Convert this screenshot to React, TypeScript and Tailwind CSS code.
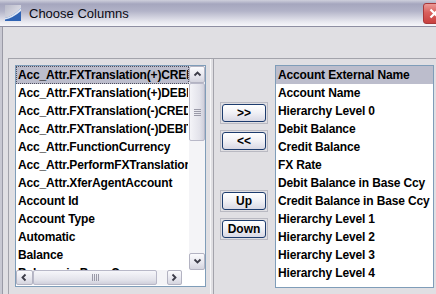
import React from "react";

const leftItems = [
  "Acc_Attr.FXTranslation(+)CREDIT",
  "Acc_Attr.FXTranslation(+)DEBIT",
  "Acc_Attr.FXTranslation(-)CREDIT",
  "Acc_Attr.FXTranslation(-)DEBIT",
  "Acc_Attr.FunctionCurrency",
  "Acc_Attr.PerformFXTranslation",
  "Acc_Attr.XferAgentAccount",
  "Account Id",
  "Account Type",
  "Automatic",
  "Balance",
  "Balance in Base Ccy",
];

const rightItems = [
  "Account External Name",
  "Account Name",
  "Hierarchy Level 0",
  "Debit Balance",
  "Credit Balance",
  "FX Rate",
  "Debit Balance in Base Ccy",
  "Credit Balance in Base Ccy",
  "Hierarchy Level 1",
  "Hierarchy Level 2",
  "Hierarchy Level 3",
  "Hierarchy Level 4",
];

type Dir = "up" | "down" | "left" | "right";

const chevron: Record<Dir, string> = {
  up: "M1.5 5.5 L4.5 2.5 L7.5 5.5",
  down: "M1.5 2.5 L4.5 5.5 L7.5 2.5",
  left: "M5.5 1.5 L2.5 4.5 L5.5 7.5",
  right: "M2.5 1.5 L5.5 4.5 L2.5 7.5",
};

function ArrowButton({ dir, className }: { dir: Dir; className: string }) {
  return (
    <div
      className={`${className} flex items-center justify-center rounded-[2px] border border-[#b3b3c2] bg-[linear-gradient(to_bottom,#fbfbfd,#e6e6ee_60%,#d4d4de)]`}
    >
      <svg width="9" height="9" viewBox="0 0 9 9">
        <path d={chevron[dir]} fill="none" stroke="#3c3c48" strokeWidth="1.8" />
      </svg>
    </div>
  );
}

function VScrollbar() {
  return (
    <div className="flex h-[204px] w-[16px] flex-col bg-[#f4f4f7]">
      <ArrowButton dir="up" className="h-[17px] w-[16px]" />
      <div className="flex h-[58px] items-center justify-center rounded-[2px] border border-[#b8b8c8] bg-[linear-gradient(to_right,#f4f4f8,#e2e2ea_70%,#cfcfdb)]">
        <div className="flex flex-col gap-[1px]">
          <div className="h-px w-[7px] bg-[#9a9aa8]" />
          <div className="h-px w-[7px] bg-[#9a9aa8]" />
          <div className="h-px w-[7px] bg-[#9a9aa8]" />
          <div className="h-px w-[7px] bg-[#9a9aa8]" />
        </div>
      </div>
      <div className="flex-1" />
      <ArrowButton dir="down" className="h-[17px] w-[16px]" />
    </div>
  );
}

function HScrollbar() {
  return (
    <div className="flex h-[15px] w-[173px] bg-white">
      <div className="flex h-[15px] w-[166px] bg-[#f4f4f7]">
        <ArrowButton dir="left" className="h-[15px] w-[17px]" />
        <div className="flex w-[124px] items-center justify-center rounded-[2px] border border-[#b8b8c8] bg-[linear-gradient(to_bottom,#f6f6fa,#e2e2ea_70%,#cfcfdb)]">
          <div className="flex gap-[1px]">
            <div className="h-[7px] w-px bg-[#9a9aa8]" />
            <div className="h-[7px] w-px bg-[#9a9aa8]" />
            <div className="h-[7px] w-px bg-[#9a9aa8]" />
            <div className="h-[7px] w-px bg-[#9a9aa8]" />
          </div>
        </div>
        <div className="flex-1" />
        <ArrowButton dir="right" className="h-[15px] w-[15px]" />
      </div>
    </div>
  );
}

function ListRow({
  text,
  selected,
  focused,
}: {
  text: string;
  selected?: boolean;
  focused?: boolean;
}) {
  return (
    <div
      className={`h-[18px] shrink-0 overflow-hidden whitespace-nowrap px-[1px] text-[12px] leading-[16px] font-bold tracking-[-0.15px] text-black ${
        selected ? "bg-[#bcbdcc]" : ""
      } ${focused ? "border border-dotted border-[#505060]" : "border border-transparent"}`}
    >
      {text}
    </div>
  );
}

function DialogButton({ label }: { label: string }) {
  return (
    <div className="h-[22px] w-[48px] border border-[#b9b9c2] p-px">
      <div className="flex h-full items-center justify-center rounded-[3px] border border-[#1d3c6e] bg-[linear-gradient(to_bottom,#ffffff,#f0f0f5_50%,#d8d8e4)] text-[12px] leading-none font-bold text-black">
        {label}
      </div>
    </div>
  );
}

function WindowIcon() {
  return (
    <svg width="16" height="16" viewBox="0 0 16 16">
      <defs>
        <linearGradient id="ic" x1="0" y1="0" x2="1" y2="1">
          <stop offset="0" stopColor="#b8b9c8" />
          <stop offset="1" stopColor="#eeeef4" />
        </linearGradient>
      </defs>
      <rect x="0" y="0" width="16" height="16" fill="url(#ic)" />
      <path d="M0 16 L0 13 Q7 12 16 3 L16 16 Z" fill="#2f63b4" />
      <path d="M0 13 Q7 12 16 3 L16 6 Q8 13 0 14.5 Z" fill="#dfe6f4" />
    </svg>
  );
}

export default function App() {
  return (
    <div className="flex h-[294px] w-[436px] flex-col overflow-hidden bg-[#e0dfe3] font-['Liberation_Sans',Arial,sans-serif]">
      {/* title bar */}
      <div className="flex h-[27px] shrink-0 items-center border-b border-[#8e8ea2] bg-[linear-gradient(to_bottom,#cfd0dc_0px,#a5a6be_4px,#b2b3c8_11px,#e9e9f0_22px,#f7f7fa_26px)]">
        <div className="ml-[5px]">
          <WindowIcon />
        </div>
        <span className="ml-[8px] text-[13px] leading-none text-[#0a0a14]">Choose Columns</span>
        <div className="flex-1" />
        <div className="mr-[-10px] flex h-[21px] w-[23px] items-center justify-center rounded-[3px] border border-[#a8383a] bg-[linear-gradient(to_bottom,#eb9a97,#d9605d_45%,#c8403f)]">
          <svg width="11" height="11" viewBox="0 0 11 11">
            <path d="M1.5 1.5 L9.5 9.5 M9.5 1.5 L1.5 9.5" stroke="#ffffff" strokeWidth="2.2" />
          </svg>
        </div>
      </div>

      {/* body */}
      <div className="flex flex-1 border-l-2 border-[#c8c8d2]">
        <div className="flex flex-1 border-l border-[#9a9aa6] pt-[31px] pl-[5px]">
          <div className="flex flex-1 border-t border-l border-[#a3a3ab]">
            {/* left list */}
            <div className="w-[202px] shrink-0 border-r border-[#f6f6f8] pt-[6px] pl-[6px]">
              <div className="h-[222px] w-[191px] border border-[#7f9db9] bg-white">
                <div className="grid grid-cols-[173px_16px] grid-rows-[204px_15px]">
                  <div className="flex flex-col overflow-hidden">
                    {leftItems.map((t, i) => (
                      <ListRow key={t} text={t} selected={i === 0} focused={i === 0} />
                    ))}
                  </div>
                  <VScrollbar />
                  <HScrollbar />
                  <div className="bg-white" />
                </div>
              </div>
            </div>

            {/* move buttons */}
            <div className="ml-[2px] flex w-[62px] shrink-0 flex-col border-l border-[#a3a3ab] pt-[43px] pl-[6px]">
              <DialogButton label=">>" />
              <div className="h-[6px]" />
              <DialogButton label="<<" />
              <div className="h-[38px]" />
              <DialogButton label="Up" />
              <div className="h-[6px]" />
              <DialogButton label="Down" />
            </div>

            {/* right list */}
            <div className="pt-[6px]">
              <div className="flex h-[223px] w-[159px] flex-col overflow-hidden border border-[#7f9db9] bg-white">
                {rightItems.map((t, i) => (
                  <ListRow key={t} text={t} selected={i === 0} />
                ))}
              </div>
            </div>
          </div>
        </div>
      </div>
    </div>
  );
}
